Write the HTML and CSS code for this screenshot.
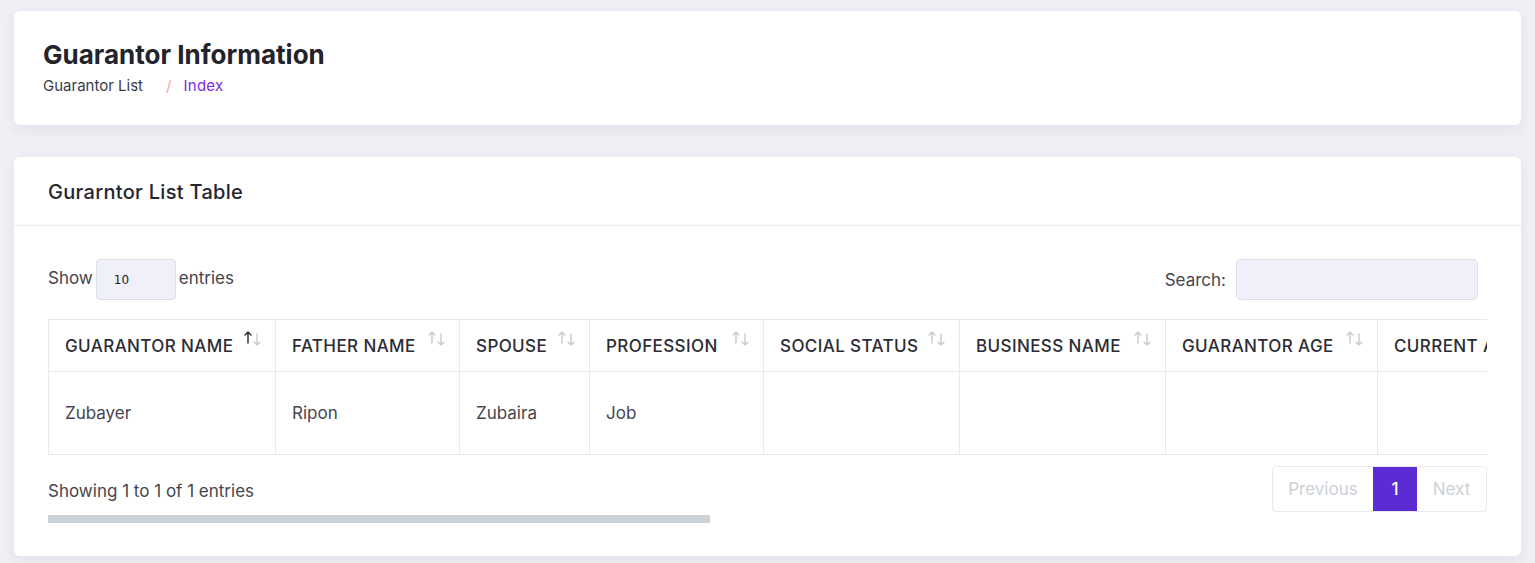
FILE: index.html
```html
<!DOCTYPE html>
<html lang="en">
<head>
<meta charset="utf-8">
<title>Guarantor Information</title>
<link rel="stylesheet" href="styles.css">
</head>
<body>
<div class="page">
  <section class="card head-card">
    <h1 class="page-title">Guarantor Information</h1>
    <nav class="crumbs">
      <span class="crumb">Guarantor List</span>
      <span class="crumb-sep">/</span>
      <span class="crumb active">Index</span>
    </nav>
  </section>

  <section class="card table-card">
    <header class="card-header">
      <h2 class="card-title">Gurarntor List Table</h2>
    </header>
    <div class="card-body">
      <div class="controls">
        <label class="length">Show <span class="select">10</span> entries</label>
        <label class="search">Search: <span class="search-input"></span></label>
      </div>
      <div class="scroller">
        <table class="dt">
          <colgroup>
            <col style="width:227px"><col style="width:184px"><col style="width:130px"><col style="width:174px">
            <col style="width:196px"><col style="width:206px"><col style="width:212px"><col style="width:250px">
            <col style="width:270px"><col style="width:200px"><col style="width:180px"><col style="width:220px">
            <col style="width:280px"><col style="width:200px"><col style="width:199px">
          </colgroup>
          <thead>
            <tr>
              <th><div class="th-in"><span>GUARANTOR NAME</span><svg class="sort asc" viewBox="0 0 20 16" width="20" height="16"><path class="up" d="M5 13V2M2 5l3-3 3 3"/><path class="down" d="M14 4v11M11 12l3 3 3-3"/></svg></div></th>
              <th><div class="th-in"><span>FATHER NAME</span><svg class="sort" viewBox="0 0 20 16" width="20" height="16"><path class="up" d="M5 13V2M2 5l3-3 3 3"/><path class="down" d="M14 4v11M11 12l3 3 3-3"/></svg></div></th>
              <th><div class="th-in"><span>SPOUSE</span><svg class="sort" viewBox="0 0 20 16" width="20" height="16"><path class="up" d="M5 13V2M2 5l3-3 3 3"/><path class="down" d="M14 4v11M11 12l3 3 3-3"/></svg></div></th>
              <th><div class="th-in"><span>PROFESSION</span><svg class="sort" viewBox="0 0 20 16" width="20" height="16"><path class="up" d="M5 13V2M2 5l3-3 3 3"/><path class="down" d="M14 4v11M11 12l3 3 3-3"/></svg></div></th>
              <th><div class="th-in"><span>SOCIAL STATUS</span><svg class="sort" viewBox="0 0 20 16" width="20" height="16"><path class="up" d="M5 13V2M2 5l3-3 3 3"/><path class="down" d="M14 4v11M11 12l3 3 3-3"/></svg></div></th>
              <th><div class="th-in"><span>BUSINESS NAME</span><svg class="sort" viewBox="0 0 20 16" width="20" height="16"><path class="up" d="M5 13V2M2 5l3-3 3 3"/><path class="down" d="M14 4v11M11 12l3 3 3-3"/></svg></div></th>
              <th><div class="th-in"><span>GUARANTOR AGE</span><svg class="sort" viewBox="0 0 20 16" width="20" height="16"><path class="up" d="M5 13V2M2 5l3-3 3 3"/><path class="down" d="M14 4v11M11 12l3 3 3-3"/></svg></div></th>
              <th><div class="th-in"><span>CURRENT ADDRESS</span><svg class="sort" viewBox="0 0 20 16" width="20" height="16"><path class="up" d="M5 13V2M2 5l3-3 3 3"/><path class="down" d="M14 4v11M11 12l3 3 3-3"/></svg></div></th>
              <th><div class="th-in"><span>PERMANENT ADDRESS</span><svg class="sort" viewBox="0 0 20 16" width="20" height="16"><path class="up" d="M5 13V2M2 5l3-3 3 3"/><path class="down" d="M14 4v11M11 12l3 3 3-3"/></svg></div></th>
              <th><div class="th-in"><span>MOBILE NUMBER</span><svg class="sort" viewBox="0 0 20 16" width="20" height="16"><path class="up" d="M5 13V2M2 5l3-3 3 3"/><path class="down" d="M14 4v11M11 12l3 3 3-3"/></svg></div></th>
              <th><div class="th-in"><span>NID NUMBER</span><svg class="sort" viewBox="0 0 20 16" width="20" height="16"><path class="up" d="M5 13V2M2 5l3-3 3 3"/><path class="down" d="M14 4v11M11 12l3 3 3-3"/></svg></div></th>
              <th><div class="th-in"><span>MONTHLY INCOME</span><svg class="sort" viewBox="0 0 20 16" width="20" height="16"><path class="up" d="M5 13V2M2 5l3-3 3 3"/><path class="down" d="M14 4v11M11 12l3 3 3-3"/></svg></div></th>
              <th><div class="th-in"><span>RELATION WITH CLIENT</span><svg class="sort" viewBox="0 0 20 16" width="20" height="16"><path class="up" d="M5 13V2M2 5l3-3 3 3"/><path class="down" d="M14 4v11M11 12l3 3 3-3"/></svg></div></th>
              <th><div class="th-in"><span>DOCUMENT</span><svg class="sort" viewBox="0 0 20 16" width="20" height="16"><path class="up" d="M5 13V2M2 5l3-3 3 3"/><path class="down" d="M14 4v11M11 12l3 3 3-3"/></svg></div></th>
              <th><div class="th-in"><span>ACTION</span><svg class="sort" viewBox="0 0 20 16" width="20" height="16"><path class="up" d="M5 13V2M2 5l3-3 3 3"/><path class="down" d="M14 4v11M11 12l3 3 3-3"/></svg></div></th>
            </tr>
          </thead>
          <tbody>
            <tr>
              <td>Zubayer</td><td>Ripon</td><td>Zubaira</td><td>Job</td><td></td><td></td><td></td><td></td>
              <td></td><td></td><td></td><td></td><td></td><td></td><td></td>
            </tr>
          </tbody>
        </table>
      </div>
      <div class="dt-foot">
        <div class="info">Showing 1 to 1 of 1 entries</div>
        <div class="pager">
          <span class="pg disabled">Previous</span>
          <span class="pg current">1</span>
          <span class="pg disabled">Next</span>
        </div>
      </div>
      <div class="hscroll"><div class="hscroll-thumb"></div></div>
    </div>
  </section>
</div>
</body>
</html>
```

FILE: styles.css
```css
* { box-sizing: border-box; }
html, body { margin: 0; padding: 0; height: 563px; overflow: hidden; }
body {
  background: #efeff5;
  font-family: "Inter", "Liberation Sans", sans-serif;
  color: #3a3a44;
}
.page {
  padding: 11px 14px 0;
  display: flex;
  flex-direction: column;
  gap: 32px;
}
.card {
  background: #fff;
  border-radius: 6px;
  box-shadow: 0 4px 14px rgba(40, 40, 80, 0.07);
}
.head-card {
  height: 114px;
  padding: 28px 29px 0;
}
.page-title {
  margin: 0;
  font-size: 26px;
  font-weight: 700;
  color: #23232b;
  line-height: 32px;
}
.crumbs {
  display: flex;
  align-items: center;
  margin-top: 5px;
  font-size: 15px;
  line-height: 20px;
}
.crumb { color: #3b3b44; }
.crumb-sep { color: #f2a6a6; margin: 0 12px 0 23px; }
.crumb.active { color: #7d2ae0; letter-spacing: 0.3px; }

.table-card { height: 399px; }
.card-header {
  height: 69px;
  border-bottom: 1px solid #eceef2;
  padding: 0 34px;
  display: flex;
  align-items: center;
}
.card-title {
  margin: 0;
  font-size: 20px;
  font-weight: 500;
  color: #25252d;
  letter-spacing: 0.3px;
  padding-top: 2px;
}
.card-body { padding: 33px 34px 0; }
.controls {
  display: flex;
  justify-content: space-between;
  align-items: center;
  height: 41px;
  padding-right: 9px;
}
.length, .search {
  display: flex;
  align-items: center;
  gap: 3px;
  font-size: 17px;
  color: #44444e;
}
.length { margin-top: -3px; }
.search { gap: 10px; }
.select {
  display: flex;
  align-items: center;
  width: 80px;
  height: 41px;
  padding-left: 17px;
  background: #eff0f9;
  border: 1px solid #dcdee6;
  border-radius: 4px;
  font-family: "DejaVu Sans", sans-serif;
  font-size: 12px;
  color: #222;
}
.length .select { margin-top: 3px; }
.search-input {
  display: block;
  width: 242px;
  height: 41px;
  background: #eff0f9;
  border: 1px solid #dcdee6;
  border-radius: 5px;
}
.scroller {
  margin-top: 19px;
  overflow: hidden;
}
.dt {
  table-layout: fixed;
  width: 3128px;
  border-collapse: collapse;
  font-size: 17px;
}
.dt th, .dt td {
  border: 1px solid #e8e9ee;
  text-align: left;
}
.dt th {
  height: 52px;
  padding: 0 12px 0 16px;
  font-weight: 500;
  color: #2c2c35;
  white-space: nowrap;
  letter-spacing: 0.4px;
}
.th-in {
  display: flex;
  justify-content: space-between;
  align-items: flex-start;
}
.th-in span { margin-top: 0; }
.sort { flex: none; margin-top: -6px; }
.sort path { fill: none; stroke: #c9c9cf; stroke-width: 1.4; stroke-linecap: round; stroke-linejoin: round; }
.sort.asc .up { stroke: #2a2a30; }
.dt td {
  height: 83px;
  padding: 0 16px;
  color: #45454f;
  font-weight: 400;
}
.dt-foot {
  display: flex;
  justify-content: space-between;
  align-items: center;
  padding: 11px 0 3px;
}
.info { font-size: 17px; color: #45454f; padding-top: 3px; }
.pager {
  display: flex;
  height: 46px;
  border: 1px solid #e9eaef;
  border-radius: 4px;
  overflow: hidden;
}
.pg {
  display: flex;
  align-items: center;
  justify-content: center;
  font-size: 17px;
}
.pg.disabled { color: #ccd0d8; }
.pg:first-child { width: 100px; }
.pg:last-child { width: 69px; }
.pg.current {
  width: 44px;
  background: #5b2bd4;
  color: #fff;
  font-weight: 500;
}
.hscroll { height: 8px; width: 100%; }
.hscroll-thumb { width: 662px; height: 8px; background: #cdd1d8; }
```
